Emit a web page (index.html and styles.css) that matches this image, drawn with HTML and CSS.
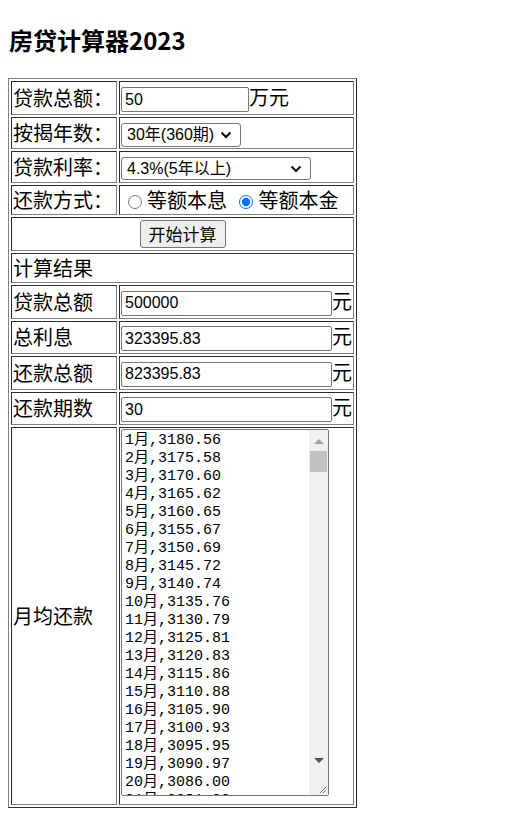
FILE: index.html
```html
<!DOCTYPE html>
<html lang="zh-CN">
<head>
  <meta charset="UTF-8">
  <title>房贷计算器2023</title>
  <link rel="stylesheet" href="styles.css">
</head>
<body>
  <h2>房贷计算器2023</h2>
  <table class="calc">
    <tr class="row-amount">
      <td class="label">贷款总额：</td>
      <td><input type="text" class="amount" value="50">万元</td>
    </tr>
    <tr class="row-select">
      <td class="label">按揭年数：</td>
      <td>
        <select class="years">
          <option>30年(360期)</option>
        </select>
      </td>
    </tr>
    <tr class="row-select2">
      <td class="label">贷款利率：</td>
      <td>
        <select class="rate">
          <option>4.3%(5年以上)</option>
        </select>
      </td>
    </tr>
    <tr class="row-radio">
      <td class="label">还款方式：</td>
      <td><input type="radio" name="way" class="first">等额本息 <input type="radio" name="way" checked>等额本金</td>
    </tr>
    <tr class="row-button">
      <td colspan="2" class="center"><button>开始计算</button></td>
    </tr>
    <tr class="row-title">
      <td colspan="2">计算结果</td>
    </tr>
    <tr class="row-result">
      <td>贷款总额</td>
      <td><input type="text" class="result" value="500000">元</td>
    </tr>
    <tr class="row-result short">
      <td>总利息</td>
      <td><input type="text" class="result" value="323395.83">元</td>
    </tr>
    <tr class="row-result">
      <td>还款总额</td>
      <td><input type="text" class="result" value="823395.83">元</td>
    </tr>
    <tr class="row-result short">
      <td>还款期数</td>
      <td><input type="text" class="result" value="30">元</td>
    </tr>
    <tr class="row-list">
      <td>月均还款</td>
      <td class="list-cell">
        <span class="list-wrap">
<textarea class="monthly">1月,3180.56
2月,3175.58
3月,3170.60
4月,3165.62
5月,3160.65
6月,3155.67
7月,3150.69
8月,3145.72
9月,3140.74
10月,3135.76
11月,3130.79
12月,3125.81
13月,3120.83
14月,3115.86
15月,3110.88
16月,3105.90
17月,3100.93
18月,3095.95
19月,3090.97
20月,3086.00
21月,3081.02
22月,3076.04</textarea>
          <span class="scrollbar">
            <span class="arrow-up"></span>
            <span class="thumb"></span>
            <span class="arrow-down"></span>
            <span class="grip">
              <svg width="9" height="9" viewBox="0 0 9 9">
                <path d="M8 2 L2 8 M8 5 L5 8" stroke="#7a7a7a" stroke-width="1"/>
              </svg>
            </span>
          </span>
        </span>
      </td>
    </tr>
  </table>
</body>
</html>
```

FILE: styles.css
```css
body {
  margin: 8px;
  font-family: "Noto Sans CJK SC", sans-serif;
  font-size: 20px;
  color: #000;
}

h2 {
  font-size: 24px;
  line-height: 28px;
  margin: 18px 0 24px 1px;
}

.calc {
  border: 1px outset #808080;
  border-spacing: 2px;
}

.calc td {
  box-sizing: border-box;
  border: 1px inset #808080;
  padding: 1px;
  line-height: 26px;
  white-space: nowrap;
}

/* row heights taken from the screenshot */
.row-amount td { height: 34px; }
.row-select td { height: 31px; }
.row-select2 td { height: 32px; }
.row-radio td { height: 30px; }
.row-button td { height: 34px; }
.row-title td { height: 30px; }
.row-result td { height: 34px; }
.row-result.short td { height: 33px; }
.row-list td { height: 378px; }

.label {
  width: 106px;
}

.center {
  text-align: center;
}

input[type="text"] {
  box-sizing: border-box;
  height: 25px;
  margin: 0;
  padding: 0 3px;
  border: 1px solid #767676;
  border-radius: 2px;
  font-family: "Liberation Sans", "Noto Sans CJK SC", sans-serif;
  font-size: 16px;
  vertical-align: middle;
}

.amount {
  width: 128px;
}

.result {
  width: 211px;
  height: 26px;
}

select {
  box-sizing: border-box;
  height: 24px;
  margin: 0;
  padding: 0 24px 0 5px;
  border: 1px solid #767676;
  border-radius: 3px;
  background: #fff url("data:image/svg+xml;utf8,<svg xmlns='http://www.w3.org/2000/svg' width='12' height='8' viewBox='0 0 12 8'><path d='M1.5 1.5 L6 6 L10.5 1.5' fill='none' stroke='black' stroke-width='2'/></svg>") no-repeat right 8px center;
  -webkit-appearance: none;
  appearance: none;
  font-family: "Liberation Sans", "Noto Sans CJK SC", sans-serif;
  font-size: 16px;
  color: #000;
  vertical-align: middle;
}

.years {
  width: 120px;
}

.rate {
  width: 190px;
  height: 23px;
}

input[type="radio"] {
  width: 14px;
  height: 14px;
  margin: 0 5px 0 8px;
  vertical-align: -1px;
}

input[type="radio"].first {
  margin-left: 7px;
}

button {
  box-sizing: border-box;
  height: 28px;
  margin: 0;
  padding: 0 8px;
  border: 1px solid #767676;
  border-radius: 3px;
  background-color: #efefef;
  font-family: "Noto Sans CJK SC", sans-serif;
  font-size: 17px;
  line-height: 24px;
  vertical-align: middle;
}

.list-cell {
  padding: 2px 1px 7px;
  vertical-align: top;
}

.list-wrap {
  position: relative;
  display: block;
  width: 208px;
  height: 367px;
}

.monthly {
  display: block;
  box-sizing: border-box;
  width: 208px;
  height: 367px;
  margin: 0;
  padding: 2px 22px 2px 3px;
  border: 1px solid #767676;
  border-radius: 2px;
  font-family: "Liberation Mono", "Noto Sans CJK SC", monospace;
  font-size: 15px;
  line-height: 18px;
  resize: none;
  overflow: hidden;
}

/* textarea scrollbar, drawn by hand */
.scrollbar {
  position: absolute;
  top: 1px;
  right: 1px;
  bottom: 1px;
  width: 19px;
  background: #f0f0f0;
}

.arrow-up,
.arrow-down {
  position: absolute;
  left: 5px;
  width: 0;
  height: 0;
  border-left: 5px solid transparent;
  border-right: 5px solid transparent;
}

.arrow-up {
  top: 9px;
  border-bottom: 5px solid #a3a3a3;
}

.arrow-down {
  bottom: 32px;
  border-top: 5px solid #505050;
}

.thumb {
  position: absolute;
  top: 21px;
  left: 1px;
  width: 17px;
  height: 21px;
  background: #c1c1c1;
}

.grip {
  position: absolute;
  right: 1px;
  bottom: 1px;
  width: 9px;
  height: 9px;
  line-height: 0;
}
```
